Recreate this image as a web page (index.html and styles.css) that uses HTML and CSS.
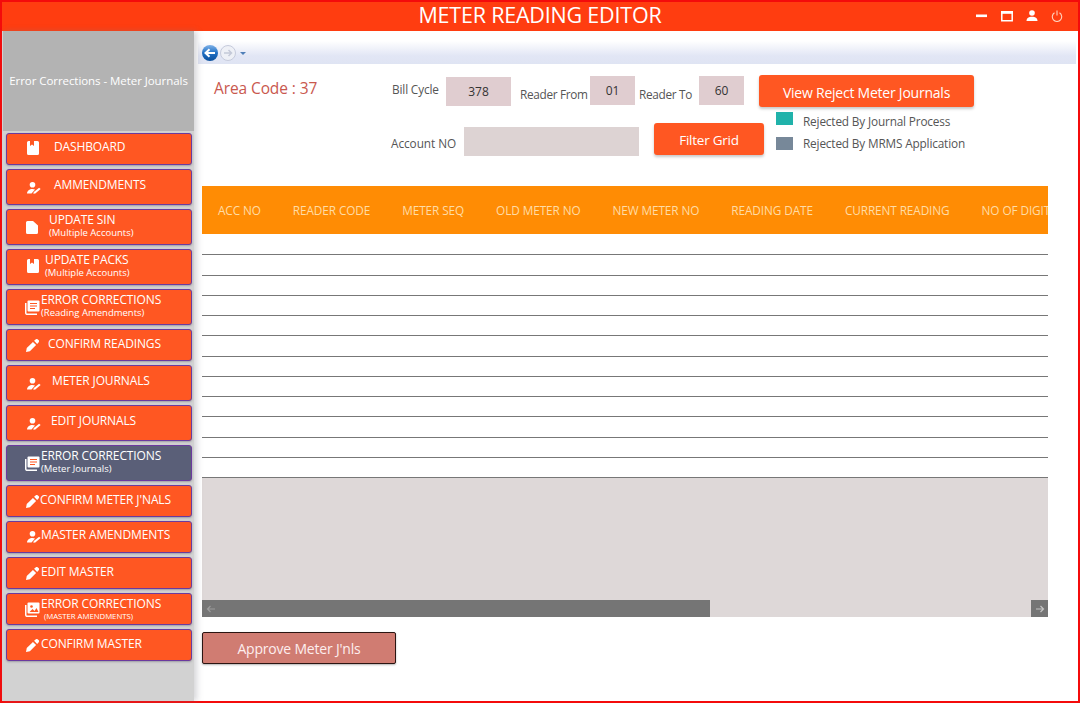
FILE: index.html
```html
<!DOCTYPE html>
<html lang="en">
<head>
<meta charset="utf-8">
<title>Meter Reading Editor</title>
<link rel="stylesheet" href="styles.css">
</head>
<body>
<svg class="sprites" width="0" height="0" aria-hidden="true">
  <symbol id="i-book" viewBox="0 0 12 14"><path d="M0 1.500A1.500 1.500 0 0 1 1.500 0H3v5l2-1.400L7 5V0h3.500A1.500 1.500 0 0 1 12 1.500V12.500A1.500 1.500 0 0 1 10.500 14H1.500A1.500 1.500 0 0 1 0 12.500z" fill="#fff"/></symbol>
  <symbol id="i-user" viewBox="0 0 14 12"><circle cx="5.500" cy="2.800" r="2.800" fill="#fff"/><path d="M0 11.500c0-2.600 2.500-4.500 5.500-4.500 1 0 1.800.2 2.500.5L4.500 11.500z" fill="#fff"/><path d="M6.300 11.800l.5-1.800 5.300-4.300 1.500 1.400-5.300 4.300z" fill="#fff"/></symbol>
  <symbol id="i-file" viewBox="0 0 12 13"><path d="M1.500 0H7l5 4.500v7A1.500 1.500 0 0 1 10.500 13H1.500A1.500 1.500 0 0 1 0 11.500V1.500A1.500 1.500 0 0 1 1.500 0z" fill="#fff"/></symbol>
  <symbol id="i-pen" viewBox="0 0 14 14"><path d="M0 14l.8-4.200 6.700-6.700 3.400 3.400-6.700 6.700z" fill="#fff"/><path d="M8.700 2l1.600-1.500a1.800 1.800 0 0 1 2.500 0l.7.700a1.800 1.800 0 0 1 0 2.500L12 5.300z" fill="#fff"/></symbol>
  <symbol id="i-lib" viewBox="0 0 15 15"><path d="M3.500 0.500h10a1 1 0 0 1 1 1v9a1 1 0 0 1-1 1h-10a1 1 0 0 1-1-1v-9a1 1 0 0 1 1-1z" fill="#fff"/><path d="M5 3.500h7M5 6h7M5 8.500h5" stroke="#ff5722" stroke-width="1.200"/><path d="M.75 3v10a1.300 1.300 0 0 0 1.300 1.300H12" fill="none" stroke="#fff" stroke-width="1.500"/></symbol>
  <symbol id="i-img" viewBox="0 0 15 15"><path d="M3.500 0.500h10a1 1 0 0 1 1 1v9a1 1 0 0 1-1 1h-10a1 1 0 0 1-1-1v-9a1 1 0 0 1 1-1z" fill="#fff"/><circle cx="6.500" cy="4.500" r="1.300" fill="#ff5722"/><path d="M4.500 10l3-3 2 2 2-3 2 4z" fill="#ff5722"/><path d="M.75 3v10a1.300 1.300 0 0 0 1.300 1.300H12" fill="none" stroke="#fff" stroke-width="1.500"/></symbol>
</svg>

<div class="window">
  <header class="titlebar">
    <h1 class="title">METER READING EDITOR</h1>
    <div class="win-icons">
      <svg class="win-icon" width="12" height="12" viewBox="0 0 12 12"><rect x="0" y="4.500" width="11" height="2.600" fill="#fff"/></svg>
      <svg class="win-icon" width="12" height="12" viewBox="0 0 12 12"><path d="M.8 1.800h10.400v8.900H.8z" fill="none" stroke="#fff" stroke-width="1.500"/><rect x="0" y="1" width="12" height="2.800" fill="#fff"/></svg>
      <svg class="win-icon" width="12" height="12" viewBox="0 0 12 12"><circle cx="6" cy="3" r="2.800" fill="#fff"/><path d="M.5 11c0-3 2.500-4.300 5.500-4.300s5.500 1.300 5.500 4.300z" fill="#fff"/></svg>
      <svg class="win-icon" width="12" height="12" viewBox="0 0 12 12"><path d="M3.500 2.800a4.700 4.700 0 1 0 5 0M6 .5v5" fill="none" stroke="#ffd2bd" stroke-width="1.100"/></svg>
    </div>
  </header>

  <div class="content">
    <aside class="sidebar">
      <div class="side-head">Error Corrections - Meter Journals</div>
      <nav class="menu">
        <a class="item"><svg class="ic book"><use href="#i-book"/></svg><span class="label in-54">DASHBOARD</span></a>
        <a class="item tall"><svg class="ic user"><use href="#i-user"/></svg><span class="label in-54">AMMENDMENTS</span></a>
        <a class="item tall"><svg class="ic file"><use href="#i-file"/></svg><span class="label two in-49">UPDATE SIN<small>(Multiple Accounts)</small></span></a>
        <a class="item tall"><svg class="ic book"><use href="#i-book"/></svg><span class="label two in-45">UPDATE PACKS<small>(Multiple Accounts)</small></span></a>
        <a class="item tall"><svg class="ic lib"><use href="#i-lib"/></svg><span class="label two in-41">ERROR CORRECTIONS<small>(Reading Amendments)</small></span></a>
        <a class="item"><svg class="ic pen"><use href="#i-pen"/></svg><span class="label low in-48">CONFIRM READINGS</span></a>
        <a class="item tall"><svg class="ic user"><use href="#i-user"/></svg><span class="label in-52">METER JOURNALS</span></a>
        <a class="item tall"><svg class="ic user"><use href="#i-user"/></svg><span class="label in-51">EDIT JOURNALS</span></a>
        <a class="item tall active"><svg class="ic lib"><use href="#i-lib"/></svg><span class="label two in-41">ERROR CORRECTIONS<small>(Meter Journals)</small></span></a>
        <a class="item"><svg class="ic pen"><use href="#i-pen"/></svg><span class="label low in-40">CONFIRM METER J'NALS</span></a>
        <a class="item"><svg class="ic user"><use href="#i-user"/></svg><span class="label in-41">MASTER AMENDMENTS</span></a>
        <a class="item"><svg class="ic pen"><use href="#i-pen"/></svg><span class="label low in-41">EDIT MASTER</span></a>
        <a class="item"><svg class="ic lib"><use href="#i-img"/></svg><span class="label two in-41">ERROR CORRECTIONS<small class="tiny">(MASTER AMENDMENTS)</small></span></a>
        <a class="item"><svg class="ic pen"><use href="#i-pen"/></svg><span class="label low in-41">CONFIRM MASTER</span></a>
      </nav>
    </aside>

    <main class="main">
      <div class="navstrip">
        <svg width="52" height="20" viewBox="0 0 52 20">
          <defs>
            <linearGradient id="back" x1="0" y1="0" x2="0" y2="1"><stop offset="0" stop-color="#7fb2e8"/><stop offset=".5" stop-color="#1f6fc4"/><stop offset="1" stop-color="#0b4f9c"/></linearGradient>
          </defs>
          <circle cx="30" cy="10" r="7.500" fill="#eef0f6" stroke="#c6cbdc"/>
          <path d="M26 10h7M30.500 7l3 3-3 3" fill="none" stroke="#c4c9d8" stroke-width="1.500"/>
          <circle cx="12" cy="10" r="8" fill="url(#back)"/>
          <path d="M17 10H8M11.500 6.200L7.500 10l4 3.800" fill="none" stroke="#fff" stroke-width="2"/>
          <path d="M42 9h6l-3 3z" fill="#4f7fb8"/>
        </svg>
      </div>

      <section class="toolbar">
        <div class="area-code">Area Code : 37</div>
        <div class="fields">
          <div class="field-row">
            <label class="lbl lbl-bill">Bill Cycle</label>
            <div class="box box-bill">378</div>
            <label class="lbl lbl-from">Reader From</label>
            <div class="box box-small">01</div>
            <label class="lbl lbl-to">Reader To</label>
            <div class="box box-small">60</div>
          </div>
          <div class="field-row row-two">
            <label class="lbl lbl-acc">Account NO</label>
            <div class="box box-acc"></div>
            <button class="btn btn-filter">Filter Grid</button>
          </div>
        </div>
        <div class="actions">
          <button class="btn btn-view">View Reject Meter Journals</button>
          <ul class="legend">
            <li class="legend-item"><span class="swatch teal"></span><span class="legend-text first">Rejected By Journal Process</span></li>
            <li class="legend-item"><span class="swatch slate"></span><span class="legend-text">Rejected By MRMS Application</span></li>
          </ul>
        </div>
      </section>

      <section class="grid">
        <div class="grid-head">
          <span>ACC NO</span><span>READER CODE</span><span>METER SEQ</span><span>OLD METER NO</span><span>NEW METER NO</span><span>READING DATE</span><span>CURRENT READING</span><span>NO OF DIGITS</span>
        </div>
        <div class="grid-rows">
          <div class="row"></div><div class="row"></div><div class="row"></div><div class="row"></div>
          <div class="row"></div><div class="row"></div><div class="row"></div><div class="row"></div>
          <div class="row"></div><div class="row"></div><div class="row"></div><div class="row"></div>
        </div>
        <div class="grid-empty">
          <div class="scrollbar">
            <div class="thumb">
              <svg width="10" height="8" viewBox="0 0 10 8"><path d="M9 4H2M4.500 1L1.500 4l3 3" fill="none" stroke="#9c9c9c" stroke-width="1.200"/></svg>
            </div>
            <div class="arrow-right">
              <svg width="10" height="8" viewBox="0 0 10 8"><path d="M1 4h7M5.500 1l3 3-3 3" fill="none" stroke="#c4c4c4" stroke-width="1.200"/></svg>
            </div>
          </div>
        </div>
      </section>

      <button class="approve">Approve Meter J'nls</button>
    </main>
  </div>
</div>
</body>
</html>
```

FILE: styles.css
```css
* { box-sizing: border-box; }
html, body { margin: 0; height: 100%; }
body { font-family: "Open Sans", "Noto Sans", sans-serif; background: #fff; overflow: hidden; }
.sprites { position: absolute; }

.window { width: 1080px; height: 703px; border: 2px solid #f40b0b; display: flex; flex-direction: column; background: #fff; }

.titlebar { height: 29px; flex: none; background: #ff3d10; position: relative; display: flex; align-items: center; justify-content: center; padding-bottom: 3px; }
.title { margin: 0; font-size: 21.500px; font-weight: 400; color: #fff; letter-spacing: -0.2px; line-height: 26px; }
.win-icons { position: absolute; right: 15px; top: 8px; display: flex; gap: 13px; }
.win-icon { display: block; }

.content { flex: 1; display: flex; min-height: 0; }

.sidebar { width: 192px; flex: none; background: #d2d2d2; padding-left: 1px; box-shadow: 3px 0 6px rgba(120,120,130,.3); position: relative; }
.side-head { height: 100px; background: #b3b3b3; color: #fff; font-size: 11.500px; letter-spacing: -0.06px; display: flex; align-items: center; justify-content: center; white-space: nowrap; padding-bottom: 2px; }
.menu { display: flex; flex-direction: column; gap: 4px; padding: 2px 2px 0 3px; }
.item { height: 32px; background: #ff5722; border: 1px solid #6b3a9e; border-radius: 3px; box-shadow: 0 1px 2px rgba(60,60,80,.35); display: block; position: relative; color: #fff; }
.item.tall { height: 36px; }
.item.active { background: #5a5f78; }
.ic { position: absolute; left: 19px; top: 7px; width: 14px; height: 14px; }
.ic.book { left: 20px; width: 12px; }
.tall .ic.book { top: 9px; }
.ic.file { left: 19px; width: 12px; height: 13px; top: 11px; }
.ic.user { left: 20px; width: 14px; height: 12px; top: 9px; }
.tall .ic.user { top: 12px; }
.ic.pen { left: 19px; width: 13px; height: 13px; top: 9px; }
.ic.lib { left: 18px; width: 15px; height: 15px; top: 8px; }
.tall .ic.lib { top: 10px; }
.label { display: block; position: absolute; top: 5px; font-size: 12px; letter-spacing: -0.12px; line-height: 15px; white-space: nowrap; }
.label.low { top: 6px; }
.tall .label { top: 7px; }
.tall .label.two, .label.two { top: 2px; }
.label small { display: block; font-size: 9.500px; letter-spacing: 0; line-height: 11px; margin-top: 0; }
.label small.tiny { font-size: 7.800px; letter-spacing: -0.05px; margin-left: 3px; }
.in-40 { left: 33px; } .in-41 { left: 34px; } .in-45 { left: 38px; } .in-48 { left: 41px; }
.in-49 { left: 42px; } .in-51 { left: 44px; } .in-52 { left: 45px; } .in-54 { left: 47px; }

.main { flex: 1; min-width: 0; padding-right: 2px; padding-left: 4px; }
.navstrip { height: 33px; background: linear-gradient(#fff 0, #fff 30%, #e2e6f5 75%, #dfe4f3 100%); display: flex; align-items: center; padding-top: 11px; }
.navstrip svg { display: block; }

.toolbar { height: 122px; display: flex; padding: 11px 0 0 4px; }
.area-code { width: 190px; padding-left: 12px; padding-top: 2px; font-size: 15.500px; letter-spacing: -0.1px; color: #c9584e; flex: none; line-height: 22px; }
.fields { width: 367px; flex: none; }
.field-row { display: flex; align-items: flex-start; height: 32px; }
.row-two { margin-top: 16px; }
.lbl { color: #555; font-size: 11.800px; letter-spacing: -0.15px; line-height: 16px; white-space: nowrap; flex: none; }
.lbl-bill { width: 54px; margin-top: 6px; }
.lbl-from { width: 70px; margin-left: 9px; margin-top: 11px; letter-spacing: -0.32px; }
.lbl-to { width: 60px; margin-left: 4px; margin-top: 11px; letter-spacing: -0.32px; }
.lbl-acc { width: 73px; margin-left: -1px; margin-top: 12px; letter-spacing: -0.05px; }
.box { background: #e0cdd0; color: #333; font-size: 12px; text-align: center; height: 29px; line-height: 30px; margin-top: 1px; flex: none; }
.box-bill { width: 65px; margin-top: 2px; }
.box-small { width: 45px; }
.box-acc { width: 175px; margin-top: 4px; background: #ddd3d3; }
.btn { border: 0; background: #ff5722; color: #fff; font-family: inherit; height: 32px; border-radius: 3px; box-shadow: 0 2px 3px rgba(0,0,0,.22); padding: 2px 0 0; flex: none; }
.btn-filter { width: 110px; margin-left: 15px; font-size: 13.500px; letter-spacing: -0.24px; }
.btn-view { width: 215px; display: block; font-size: 14px; letter-spacing: -0.23px; }
.legend { list-style: none; margin: 5px 0 0; padding: 0 0 0 17px; }
.legend-item { display: flex; align-items: flex-start; height: 13px; margin-bottom: 12px; color: #555; font-size: 11.800px; letter-spacing: -0.16px; white-space: nowrap; line-height: 13px; }
.legend-text.first { margin-top: 3px; }
.swatch { width: 17px; height: 13px; margin-right: 10px; flex: none; }
.teal { background: #20b2aa; }
.slate { background: #778899; }

.grid { width: 846px; height: 431px; margin-left: 4px; display: flex; flex-direction: column; }
.grid-head { height: 48px; flex: none; background: #ff8c04; display: flex; align-items: center; overflow: hidden; color: #ffdca6; font-size: 11.800px; letter-spacing: -0.1px; white-space: nowrap; }
.grid-head span { padding: 0 16px; flex: none; }
.grid-rows { padding-top: 1px; }
.row { height: 20.250px; border-bottom: 1px solid #777; }
.grid-empty { flex: 1; background: #ded8d8; display: flex; align-items: flex-end; }
.scrollbar { width: 100%; height: 17px; display: flex; justify-content: space-between; }
.thumb { width: 508px; background: #757575; display: flex; align-items: center; padding-left: 4px; }
.arrow-right { width: 17px; background: #757575; display: flex; align-items: center; justify-content: center; }

.approve { display: block; margin: 15px 0 0 4px; width: 194px; height: 32px; padding: 1px 0 0; background: #d07c72; border: 1px solid #2b1512; border-radius: 2px; color: #fdeeee; font-family: inherit; font-size: 14px; letter-spacing: -0.2px; box-shadow: 0 1px 2px rgba(0,0,0,.3); }
```
